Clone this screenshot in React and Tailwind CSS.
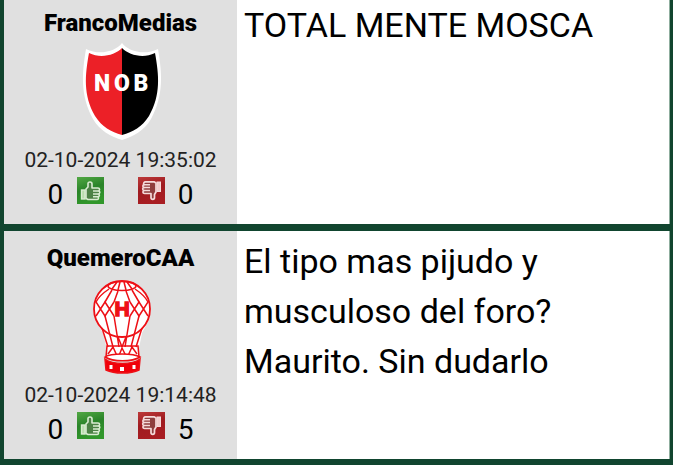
import React from "react";

function NewellsCrest() {
  return (
    <svg viewBox="0 0 100 110" className="h-[110px] w-[100px]" role="img" aria-label="NOB">
      <path
        d="M51 8 C45 16 29 21 15 14 C11 38 9 60 22 84 C29 96 39 101 51 105 C63 101 73 96 80 84 C93 60 91 38 87 14 C73 21 57 16 51 8Z"
        fill="#fff"
      />
      <path d="M51 13 C44 20 30 24 18 18 C14 40 12 60 24 81 C31 92 40 97 51 100Z" fill="#ec2027" />
      <path d="M51 13 C58 20 72 24 84 18 C88 40 90 60 78 81 C71 92 62 97 51 100Z" fill="#000" />
      <g textAnchor="middle" className="font-['Roboto',sans-serif] text-[23px] font-black" fill="#fff">
        <text x="31" y="56">N</text>
        <text x="51" y="56">O</text>
        <text x="70" y="56">B</text>
      </g>
    </svg>
  );
}

function HuracanCrest() {
  return (
    <svg viewBox="0 0 100 110" className="h-[110px] w-[100px]" role="img" aria-label="H" fill="none" stroke="#ee1016" strokeWidth="1.5">
      <path
        d="M51 11 C34 11 23 24 23 39 C23 49 28 56 32 63 L38 88 H66 L71 63 C75 56 79 49 79 39 C79 24 68 11 51 11Z"
        fill="#fff"
        stroke="none"
      />
      <circle cx="51" cy="39" r="28" strokeWidth="1.8" />
      <ellipse cx="51" cy="16" rx="14" ry="4.5" />
      <path d="M46 12 L41 19 M49 12 L47 20 M53 12 L55 20 M56 12 L61 19" />
      <path d="M38 19 C32 23 27 28 25 32 L34 46 L43 32 M25 46 L34 32 L43 46" />
      <path d="M64 19 C70 23 75 28 77 32 L68 46 L59 32 M77 46 L68 32 L59 46" />
      <path d="M41 20 L34 32 M61 20 L68 32 M47 21 L43 32 M55 21 L59 32" />
      <path d="M31 58 L37 77 M71 58 L65 77 M34 46 L42 77 M68 46 L60 77 M43 46 L48 77 M59 46 L54 77 M47 67 L51 77 M55 67 L51 77" />
      <path d="M36 76 H67 L68 87 H35Z M37 84 L42 77 L47 88 L51 78 L56 88 L61 77 L66 84" />
      <path d="M34 87 C40 83 62 83 69 87 C61 92 42 92 34 87Z" fill="#fff" />
      <path d="M34 89 C42 95 61 95 69 89 L68 100 C60 104 43 104 35 100Z" fill="#f0000a" />
      <path d="M40 95 V99 M63 95 V99" stroke="#fff" strokeWidth="3" />
      <path d="M51 97 V101" stroke="#fff" strokeWidth="4" />
      <text
        x="51"
        y="46"
        textAnchor="middle"
        className="font-['Liberation_Sans',sans-serif] text-[21px] font-bold"
        fill="#ee1016"
        strokeWidth="1.5"
      >
        H
      </text>
    </svg>
  );
}

function ThumbUp() {
  return (
    <svg viewBox="0 0 27 27" className="size-[27px]" aria-hidden="true">
      <defs>
        <linearGradient id="green" x1="0" y1="0" x2="0.3" y2="1">
          <stop offset="0" stopColor="#52a844" />
          <stop offset="0.5" stopColor="#2a8429" />
          <stop offset="1" stopColor="#31972b" />
        </linearGradient>
      </defs>
      <rect width="27" height="27" fill="url(#green)" />
      <rect x="4.5" y="13" width="3.5" height="9" fill="#b9dcae" stroke="#d9ecd1" strokeWidth="1.4" />
      <path
        d="M9 21.5 V12 L11 10 V6.5 C11 4.5 15 4.5 15 7 V11 H21 C23 11 23 13.5 21.5 14 C23.5 14.5 23 16.5 21.5 17 C23 17.5 22.5 19.5 21 19.7 C22 20.5 21.5 22.5 20 22.5 H11Z"
        fill="#4c8245"
        stroke="#d9ecd1"
        strokeWidth="1.6"
        strokeLinejoin="round"
      />
      <path d="M16 14 H21.5 M16 17 H21.5 M16 19.8 H21" stroke="#d9ecd1" strokeWidth="1.5" />
    </svg>
  );
}

function ThumbDown() {
  return (
    <svg viewBox="0 0 27 27" className="size-[27px]" aria-hidden="true">
      <defs>
        <linearGradient id="red" x1="0" y1="0" x2="0.3" y2="1">
          <stop offset="0" stopColor="#bd3a3a" />
          <stop offset="0.5" stopColor="#9f1b20" />
          <stop offset="1" stopColor="#a81d22" />
        </linearGradient>
      </defs>
      <rect width="27" height="27" fill="url(#red)" />
      <rect x="19" y="5" width="3.5" height="9.5" fill="#f0cccc" stroke="#f5dada" strokeWidth="1" />
      <path
        d="M18 6 V15 L16.5 17.5 V20.5 C16.5 23 13 23 13 20.5 V16.5 H6.5 C4.5 16.5 4.5 14 6 13.5 C4 13 4.5 10.7 6 10.5 C4.5 10 4.5 8 6 7.7 C5 6.5 6 4.8 7.5 4.8 H16Z"
        fill="#8f3d3d"
        stroke="#f5dada"
        strokeWidth="1.7"
        strokeLinejoin="round"
      />
      <path d="M6 7.7 H12 M6 10.5 H12 M6 13.5 H12" stroke="#f5dada" strokeWidth="1.6" />
    </svg>
  );
}

function Post({ author, crest, date, up, down, text, asidePad, textPad }) {
  return (
    <article className="flex border-r border-[#8fae9e] bg-white">
      <aside className={`flex w-[233px] shrink-0 flex-col items-center bg-[#e0e0e0] pb-[15px] ${asidePad}`}>
        <h2 className="text-2xl leading-9 font-black">{author}</h2>
        <div className="-my-1.5 flex h-[110px] items-center">{crest}</div>
        <time className="mt-1 text-[21px] leading-[34px] text-[#222]">{date}</time>
        <div className="flex h-8 items-start text-[28px] leading-9">
          <span className="w-[29px]">{up}</span>
          <button type="button" aria-label="Me gusta" className="mr-[34px] block">
            <ThumbUp />
          </button>
          <button type="button" aria-label="No me gusta" className="block">
            <ThumbDown />
          </button>
          <span className="w-[29px] text-right">{down}</span>
        </div>
      </aside>
      <p className={`min-w-0 flex-1 pr-16 pl-[7px] text-[34px] leading-[50px] ${textPad}`}>{text}</p>
    </article>
  );
}

export default function App() {
  return (
    <main className="flex min-h-screen flex-col gap-[7px] bg-[#11452f] pr-[3px] pl-1 font-['Roboto',sans-serif] text-black">
      <Post
        author="FrancoMedias"
        crest={<NewellsCrest />}
        date="02-10-2024 19:35:02"
        up="0"
        down="0"
        text="TOTAL MENTE MOSCA"
        asidePad="pt-[5px]"
        textPad="pt-0"
      />
      <Post
        author="QuemeroCAA"
        crest={<HuracanCrest />}
        date="02-10-2024 19:14:48"
        up="0"
        down="5"
        text="El tipo mas pijudo y musculoso del foro? Maurito. Sin dudarlo"
        asidePad="pt-[9px]"
        textPad="pt-[5px]"
      />
    </main>
  );
}
